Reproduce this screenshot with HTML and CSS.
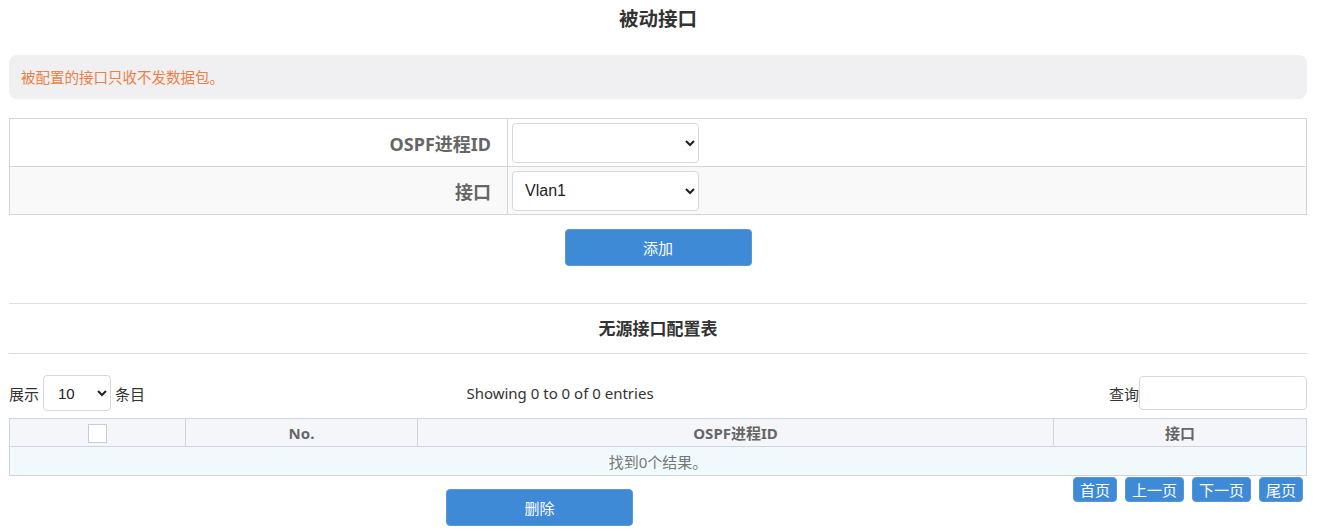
FILE: index.html
```html
<!DOCTYPE html>
<html lang="zh-CN">
<head>
<meta charset="UTF-8">
<title>被动接口</title>
<link rel="stylesheet" href="styles.css">
</head>
<body>
<div class="container">
    <h2 class="page-title">被动接口</h2>
    <div class="alert">被配置的接口只收不发数据包。</div>

    <table class="form-table">
        <tr>
            <th>OSPF进程ID</th>
            <td><select class="form-select"><option></option></select></td>
        </tr>
        <tr class="alt">
            <th>接口</th>
            <td><select class="form-select"><option>Vlan1</option></select></td>
        </tr>
    </table>
    <div class="add-row">
        <button class="btn btn-wide">添加</button>
    </div>

    <hr class="divider">
    <h3 class="sub-title">无源接口配置表</h3>
    <hr class="divider divider-top">

    <div class="dt-controls">
        <div class="dt-length">展示 <select class="len-select"><option>10</option></select> 条目</div>
        <div class="dt-info">Showing 0 to 0 of 0 entries</div>
        <div class="dt-search">查询<input type="text" class="search-input"></div>
    </div>

    <table class="data-table">
        <thead>
            <tr>
                <th class="col-check"><span class="checkbox"></span></th>
                <th class="col-no">No.</th>
                <th class="col-id">OSPF进程ID</th>
                <th>接口</th>
            </tr>
        </thead>
        <tbody>
            <tr><td colspan="4" class="empty">找到0个结果。</td></tr>
        </tbody>
    </table>

    <div class="bottom-row">
        <button class="btn btn-wide btn-delete">删除</button>
        <div class="pager">
            <button class="btn btn-page">首页</button>
            <button class="btn btn-page">上一页</button>
            <button class="btn btn-page">下一页</button>
            <button class="btn btn-page">尾页</button>
        </div>
    </div>
</div>
</body>
</html>
```

FILE: styles.css
```css
body {
    margin: 0;
    font-family: "Noto Sans", "Noto Sans CJK SC", sans-serif;
    font-size: 14px;
    color: #333;
    background: #fff;
}
.container {
    padding: 0 12px 0 9px;
}
.page-title {
    margin: 0;
    height: 37px;
    line-height: 37px;
    text-align: center;
    font-size: 19.5px;
    font-weight: bold;
    color: #333;
}
.alert {
    margin-top: 18px;
    height: 44px;
    line-height: 44px;
    padding: 0 12px;
    background: #f0f0f3;
    border-radius: 8px;
    color: #ec7f45;
    font-size: 14.5px;
}
.form-table {
    width: 100%;
    margin-top: 19px;
    border-collapse: collapse;
}
.form-table th,
.form-table td {
    border: 1px solid #d3d5dd;
}
.form-table tr {
    height: 48px;
}
.form-table tr.alt {
    background: #f9f9fa;
}
.form-table th {
    width: 480px;
    padding-right: 16px;
    text-align: right;
    font-size: 18px;
    color: #666;
}
.form-table td {
    padding: 0 4px;
}
.form-select {
    width: 187px;
    height: 40px;
    padding: 0 8px;
    border: 1px solid #d6d8de;
    border-radius: 4px;
    background: #fff;
    font-family: "Liberation Sans", Arial, sans-serif;
    font-size: 16px;
    color: #222;
}
.add-row {
    display: flex;
    justify-content: center;
    margin-top: 14px;
}
.btn {
    border: 1px solid #5b97d4;
    border-radius: 4px;
    background: #3e8ad6;
    color: #fff;
    font-family: "Noto Sans CJK SC", sans-serif;
    cursor: pointer;
}
.btn-wide {
    width: 187px;
    height: 37px;
    font-size: 15px;
}
.divider {
    margin: 37px 0 0;
    border: 0;
    border-top: 1px solid #dfdfe2;
}
.divider-top {
    margin-top: 0;
}
.sub-title {
    margin: 0;
    height: 49px;
    line-height: 49px;
    text-align: center;
    font-size: 17px;
    font-weight: bold;
    color: #333;
}
.dt-controls {
    display: flex;
    align-items: center;
    margin-top: 21px;
    height: 36px;
    font-size: 15px;
}
.dt-length {
    width: 204px;
    display: flex;
    align-items: center;
    gap: 4px;
}
.len-select {
    width: 68px;
    height: 36px;
    padding: 0 6px 0 10px;
    border: 1px solid #d6d8de;
    border-radius: 4px;
    background: #fff;
    font-family: "Liberation Sans", Arial, sans-serif;
    font-size: 15px;
    color: #222;
}
.dt-info {
    flex: 1;
    text-align: center;
    color: #333;
}
.dt-search {
    width: 400px;
    display: flex;
    justify-content: flex-end;
    align-items: center;
}
.search-input {
    width: 168px;
    height: 34px;
    box-sizing: border-box;
    border: 1px solid #d6d8de;
    border-radius: 4px;
}
.data-table {
    width: 100%;
    margin-top: 7px;
    border-collapse: collapse;
}
.data-table th,
.data-table td {
    border: 1px solid #d0d4de;
    text-align: center;
}
.data-table thead tr {
    height: 28px;
    background: #f5f6fa;
}
.data-table th {
    font-size: 15px;
    color: #666;
    padding: 0;
}
.col-check { width: 175px; }
.col-no { width: 231px; }
.col-id { width: 635px; }
.checkbox {
    display: inline-block;
    width: 17px;
    height: 17px;
    background: #fff;
    border: 1px solid #c8ccd4;
    vertical-align: middle;
}
.data-table tbody tr {
    height: 29px;
    background: #f0fafd;
}
.empty {
    font-size: 15px;
    color: #777;
}
.bottom-row {
    display: flex;
    justify-content: space-between;
    align-items: flex-start;
}
.btn-delete {
    margin: 13px 0 0 437px;
    width: 187px;
    height: 37px;
}
.pager {
    display: flex;
    gap: 8px;
    margin-top: 1px;
    padding-right: 4px;
}
.btn-page {
    height: 25px;
    padding: 0 6px;
    font-size: 15px;
    line-height: 23px;
}
```
